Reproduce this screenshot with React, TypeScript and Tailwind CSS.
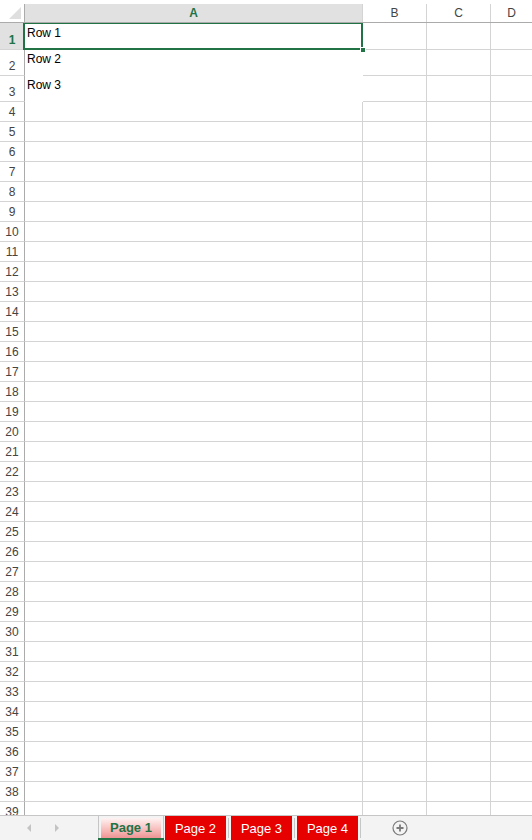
import React from "react";

const rows = Array.from({ length: 39 }, (_, i) => i + 1);

const rowHeight = (n: number) => {
  if (n === 1) return "h-[27px]";
  if (n === 2 || n === 3) return "h-[26px]";
  return "h-[20px]";
};

const cellText: Record<number, string> = { 1: "Row 1", 2: "Row 2", 3: "Row 3" };

function Tab({ label, active }: { label: string; active?: boolean }) {
  if (active) {
    return (
      <div className="relative flex h-full w-[66px] items-start border-x border-[#c6c6c6] px-[2px] pt-[2px]">
        <div className="flex h-[20px] w-full items-center justify-center bg-gradient-to-b from-[#fdf3f3] to-[#ee9494] text-[13px] font-bold text-[#217346]">
          {label}
        </div>
        <div className="absolute bottom-0 left-[-1px] right-[-1px] h-[2px] bg-[#217346]" />
      </div>
    );
  }
  return (
    <div className="flex h-full items-stretch">
      <div className="flex w-[61px] items-center justify-center bg-[#e60000] pt-[1px] text-[13px] text-white">
        {label}
      </div>
      <div className="mx-[2px] my-[2px] w-px bg-[#c6c6c6]" />
    </div>
  );
}

export default function App() {
  return (
    <div className="flex h-[840px] w-[532px] flex-col overflow-hidden bg-white font-['Liberation_Sans',Arial,sans-serif] text-black">
      <div className="h-[4px] shrink-0 bg-white" />

      {/* Column headers */}
      <div className="flex h-[19px] shrink-0 border-b border-[#ababab] text-[12px]">
        <div className="relative w-[25px] shrink-0 border-r border-[#ababab] bg-white">
          <svg className="absolute bottom-[3px] right-[3px]" width="12" height="12" viewBox="0 0 12 12">
            <polygon points="12,0 12,12 0,12" fill="#dfdfdf" />
          </svg>
        </div>
        <div className="flex w-[338px] shrink-0 items-center justify-center border-r border-[#d4d4d4] bg-[#e1e1e1] font-bold text-[#217346]">
          A
        </div>
        <div className="flex w-[64px] shrink-0 items-center justify-center border-r border-[#d4d4d4] text-[#444]">
          B
        </div>
        <div className="flex w-[64px] shrink-0 items-center justify-center border-r border-[#d4d4d4] text-[#444]">
          C
        </div>
        <div className="flex flex-1 items-center justify-center text-[#444]">D</div>
      </div>

      {/* Grid */}
      <div className="flex-1 overflow-hidden">
        {rows.map((n) => {
          const filled = n <= 3;
          return (
            <div key={n} className={`flex ${rowHeight(n)} shrink-0`}>
              <div
                className={`flex w-[25px] shrink-0 items-end justify-center border-r border-b border-r-[#ababab] border-b-[#d4d4d4] pb-[3px] text-[12px] leading-[12px] ${
                  n === 1 ? "bg-[#e1e1e1] font-bold text-[#217346]" : "text-[#444]"
                }`}
              >
                {n}
              </div>
              <div
                className={`relative w-[338px] shrink-0 border-b border-r ${
                  filled ? "border-white" : "border-[#d4d4d4]"
                } pl-[2px] ${n === 1 ? "pt-[2px]" : "pt-[1px]"} text-[12px] leading-[16px]`}
              >
                {cellText[n]}
                {n === 1 && (
                  <>
                    <div className="absolute inset-[-1px] left-[-2px] z-10 border-2 border-[#217346]" />
                    <div className="absolute bottom-[-4px] right-[-4px] z-10 h-[6px] w-[6px] border border-white bg-[#217346]" />
                  </>
                )}
              </div>
              <div className="w-[64px] shrink-0 border-b border-r border-[#d4d4d4]" />
              <div className="w-[64px] shrink-0 border-b border-r border-[#d4d4d4]" />
              <div className="flex-1 border-b border-[#d4d4d4]" />
            </div>
          );
        })}
      </div>

      {/* Sheet tabs */}
      <div className="flex h-[25px] shrink-0 items-stretch border-t border-[#c6c6c6] bg-[#f3f3f3]">
        <div className="flex w-[98px] shrink-0 items-center gap-[20px] pl-[25px]">
          <svg width="8" height="10" viewBox="0 0 8 10">
            <polygon points="6,1 2,5 6,9" fill="#c3c3c3" />
          </svg>
          <svg width="8" height="10" viewBox="0 0 8 10">
            <polygon points="2,1 6,5 2,9" fill="#c3c3c3" />
          </svg>
        </div>
        <Tab label="Page 1" active />
        <div className="w-[1px]" />
        <Tab label="Page 2" />
        <Tab label="Page 3" />
        <Tab label="Page 4" />
        <div className="flex flex-1 items-center pl-[29px]">
          <svg width="16" height="16" viewBox="0 0 16 16">
            <circle cx="8" cy="8" r="7" fill="none" stroke="#7a7a7a" strokeWidth="1.2" />
            <path d="M8 4.5v7M4.5 8h7" stroke="#7a7a7a" strokeWidth="1.8" />
          </svg>
        </div>
      </div>
    </div>
  );
}
